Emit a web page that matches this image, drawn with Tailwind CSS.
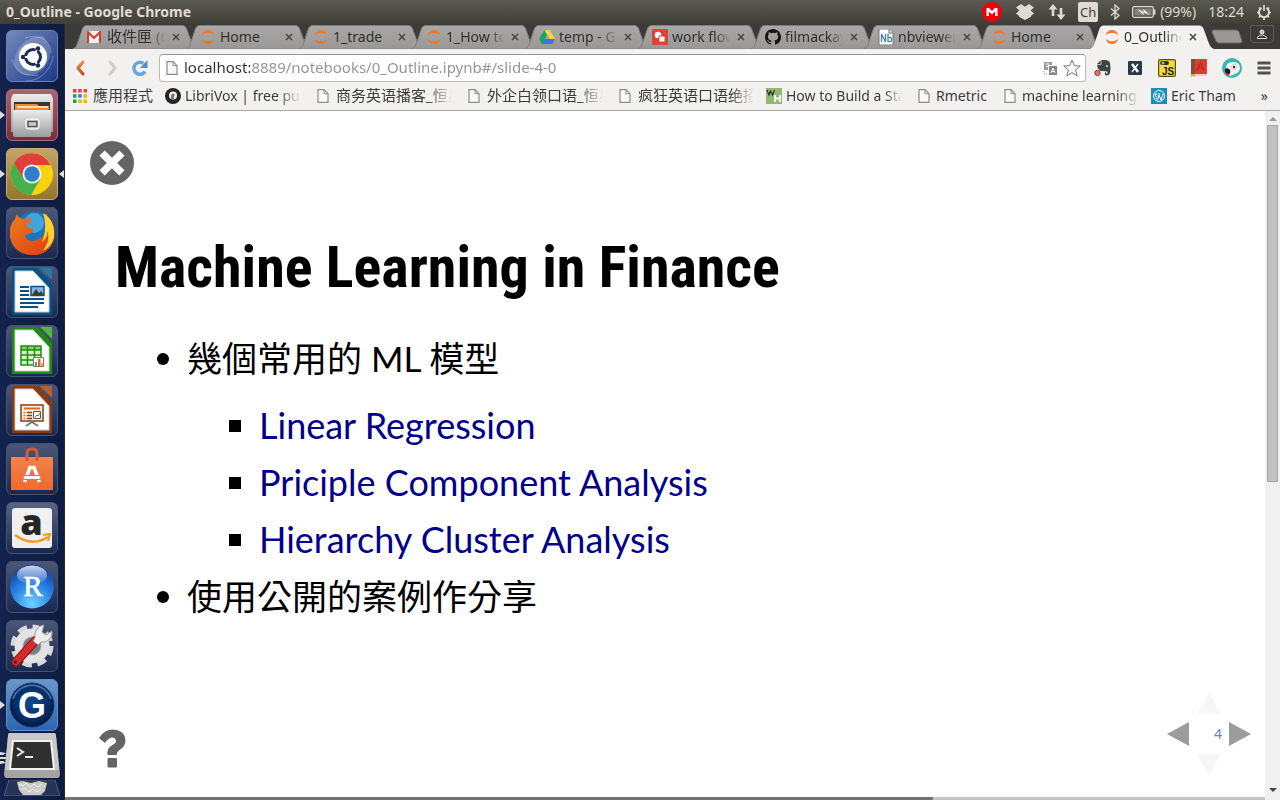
<!DOCTYPE html>
<html lang="zh-Hant">
<head>
<meta charset="utf-8">
<meta name="viewport" content="width=device-width, initial-scale=1">
<title>0_Outline - Google Chrome</title>
<script src="https://cdn.jsdelivr.net/npm/@tailwindcss/browser@4"></script>
</head>
<body class="flex min-h-screen flex-col bg-white font-['Noto_Sans','Noto_Sans_CJK_TC',sans-serif] text-sm text-[#3c3c3c]">
<svg class="absolute h-0 w-0" aria-hidden="true">
  <defs>
    <linearGradient id="tabfill" x1="0" y1="0" x2="0" y2="1"><stop offset="0" stop-color="#a9a8a6"/><stop offset="1" stop-color="#999896"/></linearGradient>
    <linearGradient id="orange" x1="0" y1="0" x2="0" y2="1"><stop offset="0" stop-color="#f58a4b"/><stop offset="1" stop-color="#cf4512"/></linearGradient>
    <linearGradient id="silver" x1="0" y1="0" x2="0" y2="1"><stop offset="0" stop-color="#ececec"/><stop offset="1" stop-color="#9c9c9c"/></linearGradient>
    <linearGradient id="bag" x1="0" y1="0" x2="0" y2="1"><stop offset="0" stop-color="#f0834f"/><stop offset="1" stop-color="#f2692b"/></linearGradient>
    <radialGradient id="globe" cx=".5" cy=".9" r=".9"><stop offset="0" stop-color="#6fd3ff"/><stop offset=".5" stop-color="#2a86e6"/><stop offset="1" stop-color="#0b3aa0"/></radialGradient>
    <radialGradient id="gball" cx=".5" cy=".45" r=".55"><stop offset="0" stop-color="#0b4a93"/><stop offset=".75" stop-color="#062a62"/><stop offset="1" stop-color="#04173a"/></radialGradient>
    <linearGradient id="ffox" x1="0" y1="0" x2="1" y2="1"><stop offset="0" stop-color="#ef7b22"/><stop offset="1" stop-color="#d93c10"/></linearGradient>
    <linearGradient id="gloss" x1="0" y1="0" x2="0" y2="1"><stop offset="0" stop-color="#fff" stop-opacity=".8"/><stop offset="1" stop-color="#fff" stop-opacity=".05"/></linearGradient>
    <symbol id="tab" viewBox="0 0 124 24" preserveAspectRatio="none">
      <path d="M0 24 C3 23 4 20 6 14 L9 5 C10 2 11 .5 14 .5 H109 C112 .5 113 2 114 5 L118 16 C120 21 121 23 124 24Z"/>
    </symbol>
    <symbol id="jup" viewBox="0 0 16 16"><path d="M1.500 6.500C3 2.300 5.500 1 8 1s5 1.300 6.500 5.500C12.500 4.600 10.500 4 8 4s-4.500.6-6.500 2.500ZM1.500 10C3 14 5.500 15 8 15s5-1 6.500-5c-2 1.700-4 2.300-6.500 2.300S3.500 11.700 1.500 10Z" fill="#f37726"/></symbol>
    <symbol id="x" viewBox="0 0 8 8"><path d="M1 1l6 6M7 1L1 7" stroke="#454545" stroke-width="1.500"/></symbol>
    <symbol id="page" viewBox="0 0 12 14"><path d="M1 .7h6L11 4.700v8.600H1Z" fill="#fafafa" stroke="#8b8b8b" stroke-width="1.200"/><path d="M7 .7v4h4" fill="none" stroke="#8b8b8b"/></symbol>
  </defs>
</svg>

<header class="flex h-6 items-center justify-between bg-linear-to-b from-[#5b5a50] to-[#3f3e38] pr-2 pl-1.5 text-[#dfdbd2]">
  <h1 class="text-[14px] font-bold">0_Outline - Google Chrome</h1>
  <div class="flex items-center text-[14px]">
    <svg class="mr-3.5 h-5 w-5" viewBox="0 0 20 20"><circle cx="10" cy="10" r="10" fill="#f0000a"/><path d="M4.500 14V6h2.600L10 9l2.900-3h2.600v8h-2.300V9.500L10 12.600 6.800 9.500V14Z" fill="#fff"/></svg>
    <svg class="mr-3.5 h-4 w-[18px]" viewBox="0 0 18 16" fill="#dfdbd2"><path d="M5 0l4 2.800L13 0l5 3.500-3.300 3L18 9.500l-3 2.200v1L9 16l-6-3.300v-1L0 9.500l3.300-3L0 3.500Z"/></svg>
    <svg class="mr-3 h-4 w-[18px]" viewBox="0 0 18 16" fill="#dfdbd2"><path d="M5 0l4.500 5.500H6.300V12H3.700V5.500H.5ZM13 16l-4.500-5.500h3.200V4h2.600v6.500h3.200Z"/></svg>
    <span class="mr-3 flex h-5 w-5 items-center justify-center rounded-xs bg-[#dfdbd2] text-[13px] text-[#3f3e38]">Ch</span>
    <svg class="mr-3 h-4 w-2.5" viewBox="0 0 10 16" fill="none" stroke="#dfdbd2" stroke-width="1.300"><path d="M1 4.500l8 7L5 15V1l4 3.500-8 7"/></svg>
    <svg class="mr-1 h-3 w-6" viewBox="0 0 24 12"><rect x=".7" y=".7" width="20.600" height="10.600" rx="1.500" fill="none" stroke="#dfdbd2" stroke-width="1.300"/><rect x="2.500" y="2.500" width="17" height="7" fill="#85837a"/><path d="M22.500 3.500v5" stroke="#dfdbd2" stroke-width="2"/><path d="M5 3l7 3-1-3 7 6-7-3 1 3Z" fill="#fff"/></svg>
    <span class="mr-3">(99%)</span>
    <span class="mr-3">18:24</span>
    <svg class="h-4 w-4" viewBox="0 0 16 16" fill="none" stroke="#dfdbd2"><path d="M5.500 3.800a5 5 0 1 0 5 0" stroke-width="2"/><path d="M8 1v6M1 8.500h2M13 8.500h2M8 13.500V16M3 3.500L4.500 5M13 3.500L11.500 5M3 13.500L4.500 12M13 13.500L11.500 12" stroke-width="1.700"/></svg>
  </div>
</header>

<div class="flex flex-1">
<aside class="w-[65px] shrink-0 border-r border-[#2a2730] bg-linear-to-r from-[#13234d] to-[#0e1c41]">
<nav aria-label="Launcher" class="flex flex-col items-center gap-[7px] pt-[6px] pr-px">
  <button aria-label="Dash" class="h-[52px] w-[52px] overflow-hidden rounded-md border border-[#6c80b5] bg-linear-to-br from-[#7689ba] to-[#1d398b]">
    <svg viewBox="0 0 50 50"><path d="M7 31C9 15 20 5 36 5c12 14 7 29-5 37C17 48 8 41 7 31Z" fill="#fff" opacity=".2"/><path d="M5 28c3 12 12 18 26 16M44 22C43 8 31 3 18 7M19 50c15 0 25-12 27-25" stroke="#fff" stroke-opacity=".3" fill="none"/><circle cx="26" cy="26" r="14" fill="#fff"/><circle cx="26" cy="26" r="7.500" fill="none" stroke="#1b2c55" stroke-width="3"/><path d="M26 26H14M26 26l6-11M26 26l6 11" stroke="#fff" stroke-width="2"/><g fill="#1b2c55"><circle cx="16" cy="26" r="2.200"/><circle cx="31" cy="17.500" r="2.200"/><circle cx="31" cy="34.500" r="2.200"/></g></svg>
  </button>
  <button aria-label="Files" class="relative h-[52px] w-[52px] rounded-md border border-[#ad6d75] bg-linear-to-b from-[#a8656d] to-[#7d2b3a]">
    <svg class="absolute -left-[7px] top-[21px] h-2 w-[5px]" viewBox="0 0 5 8"><path d="M0 0l5 4-5 4Z" fill="#ddd"/></svg>
    <svg viewBox="0 0 50 50"><path d="M6 4h38l2 5v33H4V9Z" fill="url(#silver)"/><path d="M7 12h36v9H7Z" fill="#3e3831"/><path d="M8 14h22l2 2h10v6H8Z" fill="#ed8b31"/><path d="M10 17h31" stroke="#fff4da" stroke-width="1.500"/><path d="M6 20h38v25a2 2 0 0 1-2 2H8a2 2 0 0 1-2-2Z" fill="url(#silver)"/><rect x="19" y="29" width="13" height="10" rx="2" fill="#ddd" stroke="#fff"/><rect x="21" y="31.500" width="9" height="5" fill="#ccc" stroke="#555" stroke-width="1.500"/></svg>
  </button>
  <button aria-label="Chrome" class="relative h-[52px] w-[52px] rounded-md border border-[#caad6e] bg-linear-to-b from-[#c2a566] to-[#96752f]">
    <svg class="absolute -left-[7px] top-[21px] h-2 w-[5px]" viewBox="0 0 5 8"><path d="M0 0l5 4-5 4Z" fill="#ddd"/></svg>
    <svg class="absolute -right-[7px] top-[21px] h-2 w-[5px]" viewBox="0 0 5 8"><path d="M5 0L0 4l5 4Z" fill="#ddd"/></svg>
    <svg viewBox="0 0 50 50"><circle cx="25" cy="25" r="21" fill="#fcd20b"/><path d="M7.500 13.500A21 21 0 0 0 24 46l9.500-16H17Z" fill="#46b04a"/><path d="M7 14l10 16 8-14h18.500A21 21 0 0 0 7 14Z" fill="#e0403a"/><circle cx="25" cy="25" r="9.500" fill="#f4f4f4"/><circle cx="25" cy="25" r="7.700" fill="#317fc8"/></svg>
  </button>
  <button aria-label="Firefox" class="h-[52px] w-[52px] rounded-md border border-[#465273] bg-linear-to-b from-[#4c5776] to-[#1a2950]">
    <svg viewBox="0 0 50 50"><circle cx="27" cy="23" r="19.500" fill="#1c74bd"/><circle cx="27" cy="15" r="10" fill="#54b9e8" opacity=".7"/><path d="M37 6c9 5 12 16 10 25-3 12-13 17-23 16C10 46 2 36 3 24c0-6 2-10 5-13l2-5c1 3 3 4 6 5l8-1c0 4-3 6-5 8 2 2 5 2 8 3-2 5-7 5-9 7 2 6 9 6 13 3 8-2 12-12 9-25Z" fill="url(#ffox)"/><path d="M36 5c9 5 12 14 11 24-1 6-6 12-11 14 5-8 7-14 4-20 1 5-2 9-5 11 4-9 4-20 1-29Z" fill="#ffd02e"/></svg>
  </button>
  <button aria-label="Writer" class="h-[52px] w-[52px] rounded-md border border-[#465273] bg-linear-to-b from-[#4c5776] to-[#1a2950]">
    <svg viewBox="0 0 50 50"><path d="M7 1h23l15 16v31H5V3Z" fill="#075085"/><path d="M8 4h18l16 17v24H8Z" fill="#fff"/><path d="M8 45V4h18l16 17v24Z" fill="none" stroke="#c8ccd0"/><path d="M33 1h12v12Z" fill="#2a77a6"/><g stroke="#07518a" stroke-width="2"><path d="M13 20h9M13 24h9M13 28h9M13 32h24M13 36h24M13 40h18"/></g><path d="M24 19.500h13v9H24Z" fill="#83b9e3" stroke="#07518a" stroke-width="1.500"/><path d="M25 28l4-6 3 4 2-2 3 4Z" fill="#35412f"/></svg>
  </button>
  <button aria-label="Calc" class="h-[52px] w-[52px] rounded-md border border-[#465273] bg-linear-to-b from-[#4c5776] to-[#1a2950]">
    <svg viewBox="0 0 50 50"><path d="M7 1h23l15 16v31H5V3Z" fill="#1f8c10"/><path d="M8 4h18l16 17v24H8Z" fill="#fff"/><path d="M8 45V4h18l16 17v24Z" fill="none" stroke="#c8ccd0"/><path d="M33 1h12v12Z" fill="#4cbb3c"/><path d="M14 20h20v19H14Z" fill="#d8f5cc"/><path d="M14 20h20v4H14Z" fill="#7ed36b"/><path d="M14 20h20v19H14ZM14 24h20M14 29h20M14 34h20M20.500 20v19M27.500 20v19" fill="none" stroke="#1f8c10" stroke-width="1.500"/><path d="M26.500 31.500h10v9h-10Z" fill="#fff" stroke="#777"/><path d="M28 36h2v4h-2Z" fill="#2f9be0"/><path d="M31 33h2.500v7H31Z" fill="#e8601a"/><path d="M34 37h2v3h-2Z" fill="#f3b21a"/></svg>
  </button>
  <button aria-label="Impress" class="h-[52px] w-[52px] rounded-md border border-[#465273] bg-linear-to-b from-[#4c5776] to-[#1a2950]">
    <svg viewBox="0 0 50 50"><path d="M7 1h23l15 16v31H5V3Z" fill="#8c3a10"/><path d="M8 4h18l16 17v24H8Z" fill="#fff"/><path d="M8 45V4h18l16 17v24Z" fill="none" stroke="#c8ccd0"/><path d="M33 1h12v12Z" fill="#b96030"/><path d="M14 20h22v16H14Z" fill="#fdf0e6" stroke="#8c3a10" stroke-width="1.500"/><path d="M17 23.500h16" stroke="#d96b2c" stroke-width="2"/><path d="M16.500 27.500h2M16.500 30.500h2M16.500 33.500h2" stroke="#d96b2c" stroke-width="1.500"/><path d="M20 27.500h5M20 30.500h5M20 33.500h5" stroke="#8c3a10" stroke-width="1.500"/><path d="M26.500 26.500h7v7h-7Z" fill="#fff" stroke="#555"/><path d="M28 32l2-2 1 1 2-3" fill="none" stroke="#21a621"/><path d="M25 37l-6 4M25 37l6 4" stroke="#777" stroke-width="2"/></svg>
  </button>
  <button aria-label="Software Center" class="h-[52px] w-[52px] rounded-md border border-[#465273] bg-linear-to-b from-[#4c5776] to-[#1a2950]">
    <svg viewBox="0 0 50 50"><path d="M4 13h42v33H4Z" fill="url(#bag)"/><path d="M20 17V9q0-4 5-4t5 4v8" fill="none" stroke="#cf5c3a" stroke-width="3"/><path d="M17.500 38L23 23.500h4L32.500 38" fill="none" stroke="#fff" stroke-width="3.500"/><rect x="16" y="31.500" width="18" height="4" rx="2" fill="#fff" stroke="#f2692b"/></svg>
  </button>
  <button aria-label="Amazon" class="h-[52px] w-[52px] rounded-md border border-[#465273] bg-linear-to-b from-[#5a6583] to-[#1a2950]">
    <svg class="overflow-visible" viewBox="0 0 50 50"><rect x="5" y="5" width="40" height="40" rx="3" fill="#f0f0f0"/><text x="24.500" y="32" text-anchor="middle" font-family="Open Sans" font-weight="800" font-size="36" fill="#252525">a</text><path d="M8 32c11 8 22 9 33 2" fill="none" stroke="#f79a1c" stroke-width="2.500"/><path d="M36 32l7-1-2 7" fill="none" stroke="#f79a1c" stroke-width="2"/></svg>
  </button>
  <button aria-label="RStudio" class="h-[52px] w-[52px] rounded-md border border-[#465273] bg-linear-to-b from-[#4c5776] to-[#1a2950]">
    <svg viewBox="0 0 50 50"><circle cx="25" cy="24.500" r="22" fill="url(#globe)"/><ellipse cx="25" cy="13" rx="15" ry="9.500" fill="url(#gloss)"/><text x="26" y="34" text-anchor="middle" font-family="Liberation Serif" font-size="29" fill="#fff" stroke="#fff" stroke-width=".7">R</text></svg>
  </button>
  <button aria-label="System Settings" class="h-[52px] w-[52px] rounded-md border border-[#465273] bg-linear-to-b from-[#4c5776] to-[#1a2950]">
    <svg viewBox="0 0 50 50"><circle cx="25" cy="25" r="18.500" fill="none" stroke="#d8d8d8" stroke-width="6" stroke-dasharray="9 5.530"/><circle cx="25" cy="25" r="13" fill="none" stroke="#e3e3e3" stroke-width="9"/><circle cx="25" cy="25" r="9" fill="#777d8c" stroke="#aaa"/><path d="M9 41L29 19" stroke="#8f1515" stroke-width="9" stroke-linecap="round"/><path d="M9 41L29 19" stroke="#d42a2a" stroke-width="7" stroke-linecap="round"/><circle cx="8.500" cy="41" r="1.500" fill="#571010"/><path d="M28 17c-1-7 3-12 9-13l-2 7 4 3 6-4c1 7-5 12-11 11l-3 3-5-4Z" fill="#eee" stroke="#999"/></svg>
  </button>
  <button aria-label="Goldendict" class="relative h-[52px] w-[52px] rounded-md border border-[#5f8fc9] bg-linear-to-b from-[#6a96ca] to-[#2c66b0]">
    <svg class="absolute -left-[7px] top-[21px] h-2 w-[5px]" viewBox="0 0 5 8"><path d="M0 0l5 4-5 4Z" fill="#ddd"/></svg>
    <svg viewBox="0 0 50 50"><circle cx="25" cy="25" r="22" fill="url(#gball)" stroke="#0e356c"/><path d="M6 19A20 20 0 0 1 44 19" fill="none" stroke="#6c94c4" stroke-width="2" opacity=".6"/><text x="25" y="37.500" text-anchor="middle" font-family="Liberation Sans" font-weight="bold" font-size="36" fill="#fff">G</text></svg>
  </button>
  <div class="-mt-[6px] flex flex-col items-center">
    <button aria-label="Terminal" class="relative h-12 w-14">
      <svg class="absolute -left-1 top-5 h-3 w-2" viewBox="0 0 8 12"><path d="M0 0l6 1-3 2H0ZM0 5h6v2H0ZM0 9h3l3 2-6 1Z" fill="#ddd"/></svg>
      <svg viewBox="0 0 56 48"><path d="M6 1h44q2 0 2 3l4 38q0 4-3 4H3q-3 0-3-4L4 4q0-3 2-3Z" fill="#a5a4a0"/><path d="M6 1h44q2 0 2 3l3 34H1L4 4q0-3 2-3Z" fill="#c9c8c5"/><path d="M9 9h38l3 28H6Z" fill="#303030" stroke="#f3f3f3" stroke-width="2"/><path d="M13 16l6 4-6 4M21 25h8" fill="none" stroke="#e8e8e8" stroke-width="2"/></svg>
    </button>
    <button aria-label="Trash" class="h-4 w-14">
      <svg viewBox="0 0 56 16"><path d="M5 0h46l5 16H0Z" fill="#283453" stroke="#566080"/><path d="M13 2l6-1 8 2 8-2 8 2-2 8-4 4H19l-4-5Z" fill="#c9c9c7"/><path d="M15 4l4 2 3-3 4 4 4-3 4 3 4-3M17 10l4-2 4 4 4-3 4 3 4-3" fill="none" stroke="#f4f4f4"/></svg>
    </button>
  </div>
</nav>
</aside>

<div class="flex min-w-0 flex-1 flex-col">
<div class="flex h-[25px] items-end bg-[#3c3b37] pr-1.5 pl-2">
  <div role="tablist" class="flex h-6 w-[1130px] min-w-0 text-[#33302b]">
    <div class="relative isolate flex min-w-0 flex-1 items-center pr-[6px] pl-[14px]"><svg class="absolute inset-0 -z-10 h-full w-[124px]" fill="url(#tabfill)" stroke="#7f7e7b"><use href="#tab"/></svg>
      <button role="tab" class="flex min-w-0 flex-1 items-center gap-1.5"><svg class="h-3 w-3.5 shrink-0" viewBox="0 0 14 12"><path d="M0 0h14v12H0Z" fill="#f3f3f3"/><path d="M1 12V1l6 6 6-6v11" fill="none" stroke="#d93a2f" stroke-width="2"/></svg><span class="w-[58px] overflow-hidden text-left text-[15px] whitespace-nowrap [mask-image:linear-gradient(to_right,black_75%,transparent)]">收件匣 (6)</span></button><button aria-label="Close" class="ml-1"><svg class="h-2 w-2"><use href="#x"/></svg></button></div>
    <div class="relative isolate flex min-w-0 flex-1 items-center pr-[6px] pl-[14px]"><svg class="absolute inset-0 -z-10 h-full w-[124px]" fill="url(#tabfill)" stroke="#7f7e7b"><use href="#tab"/></svg>
      <button role="tab" class="flex min-w-0 flex-1 items-center gap-1"><svg class="h-4 w-4 shrink-0"><use href="#jup"/></svg><span>Home</span></button><button aria-label="Close" class="ml-1"><svg class="h-2 w-2"><use href="#x"/></svg></button></div>
    <div class="relative isolate flex min-w-0 flex-1 items-center pr-[6px] pl-[14px]"><svg class="absolute inset-0 -z-10 h-full w-[124px]" fill="url(#tabfill)" stroke="#7f7e7b"><use href="#tab"/></svg>
      <button role="tab" class="flex min-w-0 flex-1 items-center gap-1"><svg class="h-4 w-4 shrink-0"><use href="#jup"/></svg><span>1_trade</span></button><button aria-label="Close" class="ml-1"><svg class="h-2 w-2"><use href="#x"/></svg></button></div>
    <div class="relative isolate flex min-w-0 flex-1 items-center pr-[6px] pl-[14px]"><svg class="absolute inset-0 -z-10 h-full w-[124px]" fill="url(#tabfill)" stroke="#7f7e7b"><use href="#tab"/></svg>
      <button role="tab" class="flex min-w-0 flex-1 items-center gap-1"><svg class="h-4 w-4 shrink-0"><use href="#jup"/></svg><span class="w-[58px] overflow-hidden text-left whitespace-nowrap [mask-image:linear-gradient(to_right,black_75%,transparent)]">1_How to</span></button><button aria-label="Close" class="ml-1"><svg class="h-2 w-2"><use href="#x"/></svg></button></div>
    <div class="relative isolate flex min-w-0 flex-1 items-center pr-[6px] pl-[14px]"><svg class="absolute inset-0 -z-10 h-full w-[124px]" fill="url(#tabfill)" stroke="#7f7e7b"><use href="#tab"/></svg>
      <button role="tab" class="flex min-w-0 flex-1 items-center gap-1"><svg class="h-4 w-4 shrink-0" viewBox="0 0 16 16"><path d="M5.300 1h5.400L16 10h-5.300Z" fill="#ffcf48"/><path d="M5.300 1L8 5.700 2.700 15 0 10Z" fill="#11a861"/><path d="M5.300 10H16l-2.700 5H2.700Z" fill="#3777e3"/></svg><span class="w-[58px] overflow-hidden text-left whitespace-nowrap [mask-image:linear-gradient(to_right,black_70%,transparent)]">temp - Go</span></button><button aria-label="Close" class="ml-1"><svg class="h-2 w-2"><use href="#x"/></svg></button></div>
    <div class="relative isolate flex min-w-0 flex-1 items-center pr-[6px] pl-[14px]"><svg class="absolute inset-0 -z-10 h-full w-[124px]" fill="url(#tabfill)" stroke="#7f7e7b"><use href="#tab"/></svg>
      <button role="tab" class="flex min-w-0 flex-1 items-center gap-1"><svg class="h-4 w-4 shrink-0" viewBox="0 0 16 16"><rect width="16" height="16" rx="1" fill="#db4437"/><circle cx="6" cy="6" r="3.200" fill="#fff"/><path d="M7 7h6v6H7Z" fill="#fff" stroke="#db4437"/></svg><span class="w-[58px] overflow-hidden text-left whitespace-nowrap [mask-image:linear-gradient(to_right,black_75%,transparent)]">work flow</span></button><button aria-label="Close" class="ml-1"><svg class="h-2 w-2"><use href="#x"/></svg></button></div>
    <div class="relative isolate flex min-w-0 flex-1 items-center pr-[6px] pl-[14px]"><svg class="absolute inset-0 -z-10 h-full w-[124px]" fill="url(#tabfill)" stroke="#7f7e7b"><use href="#tab"/></svg>
      <button role="tab" class="flex min-w-0 flex-1 items-center gap-1"><svg class="h-4 w-4 shrink-0" viewBox="0 0 16 16" fill="#161616"><path d="M8 0C3.580 0 0 3.580 0 8c0 3.540 2.290 6.530 5.470 7.590.4.070.55-.17.55-.38 0-.19-.01-.82-.01-1.490-2.010.37-2.530-.49-2.690-.94-.09-.23-.48-.94-.82-1.130-.28-.15-.68-.52-.01-.53.63-.01 1.080.58 1.230.82.72 1.210 1.870.87 2.330.66.07-.52.28-.87.51-1.070-1.780-.2-3.640-.89-3.640-3.950 0-.87.31-1.590.82-2.150-.08-.2-.36-1.020.08-2.120 0 0 .67-.21 2.200.82a7.420 7.420 0 0 1 4 0c1.530-1.040 2.200-.82 2.200-.82.44 1.100.16 1.920.08 2.120.51.56.82 1.270.82 2.150 0 3.070-1.870 3.750-3.650 3.950.29.25.54.73.54 1.480 0 1.070-.01 1.930-.01 2.200 0 .21.15.46.55.38A8.010 8.010 0 0 0 16 8c0-4.420-3.580-8-8-8Z"/></svg><span class="w-[58px] overflow-hidden text-left whitespace-nowrap [mask-image:linear-gradient(to_right,black_75%,transparent)]">filmackay</span></button><button aria-label="Close" class="ml-1"><svg class="h-2 w-2"><use href="#x"/></svg></button></div>
    <div class="relative isolate flex min-w-0 flex-1 items-center pr-[6px] pl-[14px]"><svg class="absolute inset-0 -z-10 h-full w-[124px]" fill="url(#tabfill)" stroke="#7f7e7b"><use href="#tab"/></svg>
      <button role="tab" class="flex min-w-0 flex-1 items-center gap-1"><svg class="h-4 w-4 shrink-0" viewBox="0 0 16 16"><path d="M1 0h10l4 4v12H1Z" fill="#fff" stroke="#777"/><path d="M11 0v4h4" fill="#ddd" stroke="#777"/><path d="M3.500 13V5l4 8V5M10 4.500V13M10 9q3.500-2 3.500 1.500T10 12" fill="none" stroke="#4a81b0" stroke-width="1.300"/></svg><span class="w-[58px] overflow-hidden text-left whitespace-nowrap [mask-image:linear-gradient(to_right,black_75%,transparent)]">nbviewer</span></button><button aria-label="Close" class="ml-1"><svg class="h-2 w-2"><use href="#x"/></svg></button></div>
    <div class="relative isolate flex min-w-0 flex-1 items-center pr-[6px] pl-[14px]"><svg class="absolute inset-0 -z-10 h-full w-[124px]" fill="url(#tabfill)" stroke="#7f7e7b"><use href="#tab"/></svg>
      <button role="tab" class="flex min-w-0 flex-1 items-center gap-1"><svg class="h-4 w-4 shrink-0"><use href="#jup"/></svg><span>Home</span></button><button aria-label="Close" class="ml-1"><svg class="h-2 w-2"><use href="#x"/></svg></button></div>
    <div class="relative isolate flex min-w-0 flex-1 items-center pr-[6px] pl-[14px]"><svg class="absolute inset-0 -z-10 h-full w-[124px]" fill="#f2f1f0"><use href="#tab"/></svg>
      <button role="tab" aria-selected="true" class="flex min-w-0 flex-1 items-center gap-1"><svg class="h-4 w-4 shrink-0"><use href="#jup"/></svg><span class="w-[58px] overflow-hidden text-left whitespace-nowrap [mask-image:linear-gradient(to_right,black_70%,transparent)]">0_Outline</span></button><button aria-label="Close" class="ml-1"><svg class="h-2 w-2"><use href="#x"/></svg></button></div>
  </div>
  <button aria-label="New tab" class="mb-1 ml-[8px] h-4 w-8"><svg class="h-4 w-8" viewBox="0 0 32 16"><path d="M3 1h22q2 0 3 2l3 9q0 2-2 2H8q-2 0-3-2L1 3q0-2 2-2Z" fill="#9a9996" stroke="#6c6b68"/></svg></button>
  <button aria-label="User" class="mb-1.5 ml-auto flex h-[18px] w-6 items-center justify-center rounded-b-sm border border-[#5d5c57]"><svg class="h-3 w-3" viewBox="0 0 12 12"><circle cx="6" cy="4" r="2.500" fill="#ccc"/><path d="M1.500 10.500V9q4.500-4 9 0v1.500Z" fill="#3c3b37" stroke="#ddd"/></svg></button>
</div>

<div class="flex h-[33px] items-center bg-[#f2f1f0] pt-1 pr-2 pl-2.5">
  <button aria-label="Back" class="mr-5"><svg class="h-4 w-3" viewBox="0 0 12 16"><path d="M8 2L3 8l5 6" fill="none" stroke="url(#orange)" stroke-width="3" stroke-linecap="round" stroke-linejoin="round"/></svg></button>
  <button aria-label="Forward" class="mr-3"><svg class="h-4 w-3" viewBox="0 0 12 16"><path d="M3 2l5 6-5 6" fill="none" stroke="#cfcecd" stroke-width="3" stroke-linecap="round" stroke-linejoin="round"/></svg></button>
  <button aria-label="Reload" class="mr-2.5"><svg class="h-[18px] w-[18px]" viewBox="0 0 18 18"><path d="M14 12.500A6 6 0 1 1 12.500 4.500" fill="none" stroke="#6ba5dc" stroke-width="3.500"/><path d="M16.500 1v8H9Z" fill="#4d90d2"/></svg></button>
  <div class="flex h-7 min-w-0 flex-1 items-center rounded-sm border border-[#bab9b7] border-t-[#979695] bg-white pr-1 pl-1.5">
    <svg class="mr-1.5 h-3.5 w-3 shrink-0"><use href="#page"/></svg>
    <input aria-label="Address" value="localhost:8889/notebooks/0_Outline.ipynb#/slide-4-0" class="min-w-0 flex-1 bg-linear-to-r from-[#2f2f2f] from-[66px] to-[#929292] to-[66px] bg-clip-text text-[15px] text-transparent outline-none">
    <button aria-label="Translate" class="mr-1.5"><svg class="h-3.5 w-3.5" viewBox="0 0 14 14"><path d="M1 1h8v3H5v5H1Z" fill="#999"/><path d="M6 5h8v9H6Z" fill="#858585"/><path d="M8 12l2-5 2 5M8.500 10.500h3" fill="none" stroke="#fff"/><path d="M2.500 3h4M3 5.500h2" stroke="#fff"/><path d="M1 10v3h3" fill="none" stroke="#999" stroke-dasharray="1.500 1"/></svg></button>
    <button aria-label="Bookmark"><svg class="h-[18px] w-[18px]" viewBox="0 0 18 18"><path d="M9 1l2.300 5.600 6 .4-4.700 3.800 1.600 6L9 13.500l-5.200 3.300 1.600-6L.7 7l6-.4Z" fill="#fff" stroke="#777"/></svg></button>
  </div>
  <div class="ml-2 flex items-center gap-[14px]">
    <button aria-label="Evernote"><svg class="h-[18px] w-[18px]" viewBox="0 0 18 18"><path d="M3 5l4-4 4 0q4 0 5 3 1 5 0 10-1 3-4 2.500-2-1-1-3l1-.5v1.500l1.500 0v-2q-3-.5-4-.5-6 1-6.500-7Z" fill="#3f4444"/><path d="M3 5.500h4V1" fill="none" stroke="#ddd" stroke-width=".8"/><circle cx="13" cy="7" r="1" fill="#ddd"/><circle cx="3.500" cy="14" r="2.700" fill="#ef6e58" stroke="#6d4848"/></svg></button>
    <button aria-label="X"><svg class="h-[18px] w-[18px]" viewBox="0 0 18 18"><rect x="2" y="2" width="14" height="14" rx="1" fill="#263c49"/><path d="M6 5l6 8" stroke="#fff" stroke-width="2.500"/><path d="M12 5l-6 8" stroke="#fff" stroke-width="1.300"/></svg></button>
    <button aria-label="JavaScript switch"><svg class="h-[18px] w-[18px]" viewBox="0 0 18 18"><rect x=".6" y=".6" width="16.800" height="16.800" rx="1.500" fill="#f2da43" stroke="#594f18" stroke-width="1.200"/><rect x="2" y="2" width="9" height="4" rx="2" fill="#333"/><circle cx="5" cy="4" r="1.500" fill="#aaa"/><text x="4" y="16" font-family="Liberation Sans" font-size="10" font-weight="bold" fill="#222">JS</text></svg></button>
    <button aria-label="Dictionary"><svg class="h-[18px] w-[18px]" viewBox="0 0 18 18"><path d="M1 0h5v15H1Z" fill="#8c4a3e"/><path d="M5 0h12v15H5Z" fill="#de3d32"/><path d="M1 15h16v2H1Z" fill="#ded5c5"/><path d="M1 15h4v3l-2-1-2 1Z" fill="#f3a824"/><path d="M7 12l3.500-9 3.500 9M8.500 9h4" fill="none" stroke="#c02a22" stroke-width="1.500"/></svg></button>
    <button aria-label="Parrot"><svg class="h-5 w-5" viewBox="0 0 20 20"><circle cx="10" cy="10" r="10" fill="#35b8ae"/><path d="M4 10q0-6 7-6t7 6q0 4-5 6l-5 2-5-5Z" fill="#f2f2f2"/><path d="M3 11q3-2 5 1 1 3-1 4l-2 0q-3-2-2-5Z" fill="#1b1b1b"/><circle cx="12" cy="9" r="2.500" fill="#fff" stroke="#ccc"/><circle cx="12" cy="9" r="1.200" fill="#222"/><path d="M4 16l3 1" stroke="#e33" stroke-width="1.500"/></svg></button>
    <button aria-label="Menu"><svg class="h-4 w-4" viewBox="0 0 16 16" stroke="#545454" stroke-width="3"><path d="M1.500 3h13M1.500 8h13M1.500 13h13"/></svg></button>
  </div>
</div>

<nav aria-label="Bookmarks" class="flex h-[29px] items-center border-b border-[#aaa9a8] bg-[#f2f1f0] pr-3 pl-2 whitespace-nowrap">
  <a href="#" class="mr-3 flex items-center gap-1.5"><svg class="h-3.5 w-3.5" viewBox="0 0 14 14"><path d="M0 0h3.500v3.500H0ZM5.200 0h3.500v3.500H5.200ZM10.500 0H14v3.500h-3.500Z" fill="#ee4035"/><path d="M0 5.200h3.500v3.500H0ZM0 10.500h3.500V14H0Z" fill="#249a52"/><path d="M5.200 5.200h3.500v3.500H5.200Z" fill="#2b7de9"/><path d="M10.500 5.200H14v3.500h-3.500ZM5.200 10.500h3.500V14H5.200ZM10.500 10.500H14V14h-3.500Z" fill="#f5b400"/></svg><span class="w-[60px] text-[15px]">應用程式</span></a>
  <a href="#" class="mr-4 flex items-center gap-1"><svg class="h-4 w-4" viewBox="0 0 16 16"><circle cx="8" cy="8" r="8" fill="#252525"/><circle cx="8" cy="7.500" r="4" fill="#eee"/><path d="M6 11V7q2-3 4 0l-1 1v3Z" fill="#777"/></svg><span class="w-[116px] overflow-hidden [mask-image:linear-gradient(to_right,black_80%,transparent)]">LibriVox | free pub</span></a>
  <a href="#" class="mr-4 flex items-center gap-[7px]"><svg class="h-3.5 w-3"><use href="#page"/></svg><span lang="zh-Hans" class="w-[116px] overflow-hidden text-[15px] [mask-image:linear-gradient(to_right,black_80%,transparent)]">商务英语播客_恒星</span></a>
  <a href="#" class="mr-4 flex items-center gap-[7px]"><svg class="h-3.5 w-3"><use href="#page"/></svg><span lang="zh-Hans" class="w-[116px] overflow-hidden text-[15px] [mask-image:linear-gradient(to_right,black_80%,transparent)]">外企白领口语_恒星</span></a>
  <a href="#" class="mr-3 flex items-center gap-[7px]"><svg class="h-3.5 w-3"><use href="#page"/></svg><span lang="zh-Hans" class="w-[116px] overflow-hidden text-[15px] [mask-image:linear-gradient(to_right,black_80%,transparent)]">疯狂英语口语绝招</span></a>
  <a href="#" class="mr-4 flex items-center gap-1"><svg class="h-4 w-4" viewBox="0 0 16 16"><path d="M0 0h16v16H0Z" fill="#93b874"/><path d="M1 2l2 5 1.500-4L6.500 7l2-5" fill="none" stroke="#333" stroke-width="1.300"/><path d="M9 7v7M14 7v7M9 10.500h5" stroke="#fff" stroke-width="1.800"/></svg><span class="w-[116px] overflow-hidden [mask-image:linear-gradient(to_right,black_85%,transparent)]">How to Build a Sta</span></a>
  <a href="#" class="mr-4 flex items-center gap-[6px]"><svg class="h-3.5 w-3"><use href="#page"/></svg><span class="w-[52px]">Rmetric</span></a>
  <a href="#" class="mr-3 flex items-center gap-[6px]"><svg class="h-3.5 w-3"><use href="#page"/></svg><span class="w-[117px] overflow-hidden [mask-image:linear-gradient(to_right,black_80%,transparent)]">machine learning</span></a>
  <a href="#" class="flex items-center gap-1"><svg class="h-4 w-4" viewBox="0 0 16 16"><path d="M0 0h16v16H0Z" fill="#1e8cbe"/><circle cx="8" cy="8" r="5.500" fill="none" stroke="#fff"/><path d="M4 6l2.500 6L8 7l2 5 2-6M4 6h2.500M7 6h2.500" fill="none" stroke="#fff"/></svg><span>Eric Tham</span></a>
  <button aria-label="More bookmarks" class="ml-auto">»</button>
</nav>

<div class="flex flex-1">
  <main class="relative flex min-w-0 flex-1 flex-col bg-white pt-[30px] pl-[25px] font-[Lato,'Noto_Sans_CJK_TC',sans-serif] text-black">
    <button aria-label="Exit slideshow" class="w-11"><svg class="h-11 w-11" viewBox="0 0 45 45"><circle cx="22.500" cy="22.500" r="22.500" fill="#646464"/><path d="M15 15l15 15M30 15l-15 15" stroke="#fff" stroke-width="7.500" stroke-linecap="square" stroke-linejoin="round"/></svg></button>
    <section class="mt-[46px] pl-[25px]">
      <h2 class="font-['Roboto_Condensed','Open_Sans_Condensed','Noto_Sans_Condensed',Lato,sans-serif] text-[58px] leading-[72px] font-bold">Machine Learning in Finance</h2>
      <ul class="mt-[27px] pl-[42px] text-[35px] leading-[57px]">
        <li>
          <div class="flex items-center gap-[18px]"><span class="h-3 w-3 rounded-full bg-black"></span><span>幾個常用的 ML 模型</span></div>
          <ul class="mt-[10px] pl-[72px] text-[36px] text-[#00008b]">
            <li class="flex items-center gap-[18px]"><span class="h-3 w-3 bg-black"></span><a href="#">Linear Regression</a></li>
            <li class="flex items-center gap-[18px]"><span class="h-3 w-3 bg-black"></span><a href="#">Priciple Component Analysis</a></li>
            <li class="flex items-center gap-[18px]"><span class="h-3 w-3 bg-black"></span><a href="#">Hierarchy Cluster Analysis</a></li>
          </ul>
        </li>
        <li class="flex items-center gap-[18px]"><span class="h-3 w-3 rounded-full bg-black"></span><span>使用公開的案例作分享</span></li>
      </ul>
    </section>
    <button aria-label="Help" class="mt-auto mb-8 ml-2 w-[29px]"><svg class="h-[39px] w-[29px]" viewBox="0 0 29 39"><path d="M1 9Q6 .5 15 .5q12 1 12.500 11 0 6-6 9.500-3 2-3 5H9.500q-1-7 5-10 4-2 3.500-4.500-1-3-4-3Q10 9 7 14Z" fill="#646464"/><rect x="9.500" y="29" width="9.500" height="9.500" rx="1" fill="#646464"/></svg></button>
    <div class="absolute right-[14px] bottom-[24px] grid grid-cols-[22px_40px_22px] grid-rows-[22px_40px_22px] place-items-center">
      <button aria-label="Up" class="col-start-2"><svg class="h-[22px] w-6" viewBox="0 0 24 22"><path d="M12 0l12 22H0Z" fill="#f7f7f7"/></svg></button>
      <button aria-label="Previous" class="col-start-1 row-start-2"><svg class="h-6 w-[22px]" viewBox="0 0 22 24"><path d="M0 12L22 0v24Z" fill="#9c9c9c"/></svg></button>
      <span class="col-start-2 row-start-2 pl-[18px] font-['Noto_Sans'] text-sm text-[#6f83cf]">4</span>
      <button aria-label="Next" class="col-start-3 row-start-2"><svg class="h-6 w-[22px]" viewBox="0 0 22 24"><path d="M22 12L0 0v24Z" fill="#9c9c9c"/></svg></button>
      <button aria-label="Down" class="col-start-2 row-start-3"><svg class="h-[22px] w-6" viewBox="0 0 24 22"><path d="M12 22L0 0h24Z" fill="#f7f7f7"/></svg></button>
    </div>
    <div role="progressbar" aria-label="Slides" class="absolute inset-x-0 bottom-0 h-[3px] bg-[#c4c4c4]"><div class="h-full bg-[#737373]" style="width:72.300%"></div></div>
  </main>
  <div class="flex w-[15px] shrink-0 flex-col items-center bg-[#f0f0f0] py-1">
    <svg class="mt-0.5 h-1 w-2" viewBox="0 0 8 4"><path d="M4 0l4 4H0Z" fill="#999"/></svg>
    <div class="mt-1 h-[357px] w-[11px] border border-[#a5a5a5] bg-[#c1c1c1]"></div>
    <svg class="mt-auto mb-1 h-1 w-2" viewBox="0 0 8 4"><path d="M0 0h8L4 4Z" fill="#444"/></svg>
  </div>
</div>
</div>
</div>
</body>
</html>
